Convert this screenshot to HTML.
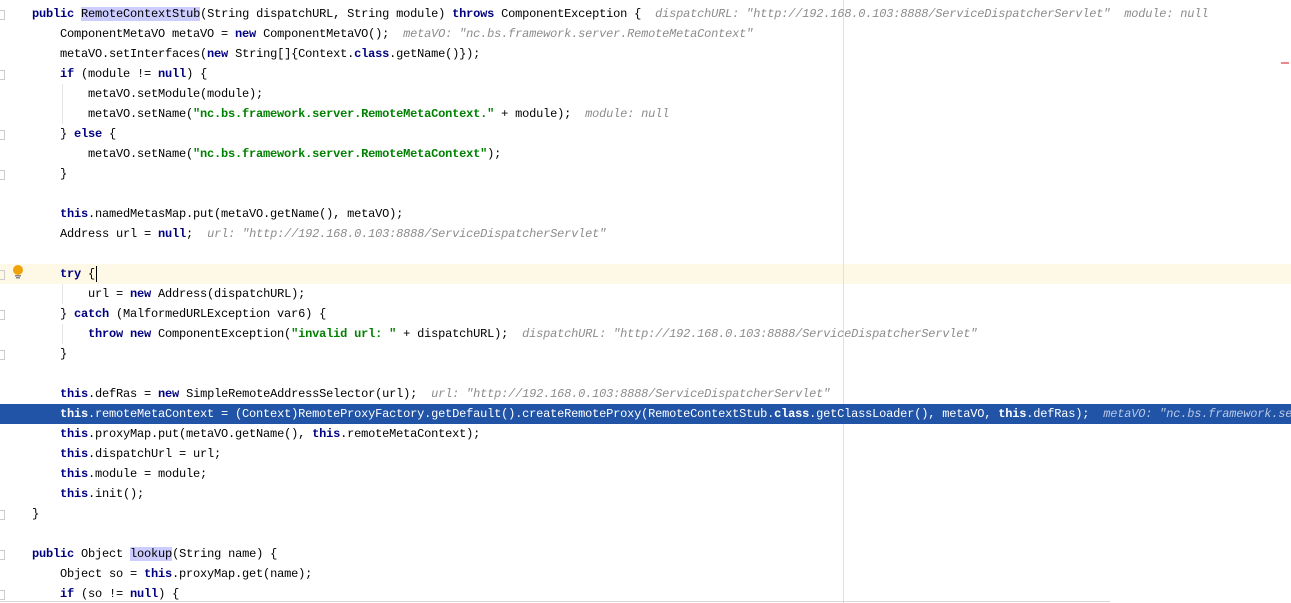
<!DOCTYPE html>
<html><head><meta charset="utf-8"><style>
html,body{margin:0;padding:0;background:#fff;width:1291px;height:603px;overflow:hidden;position:relative}
.r{position:absolute;left:4px;width:1287px;height:20px;overflow:hidden;font-family:"Liberation Mono",monospace;font-size:12px;letter-spacing:-0.2px;line-height:20px;white-space:pre;color:#000}
.k{color:#000080;font-weight:bold}
.s{color:#008000;font-weight:bold}
.h{color:#8c8c8c;font-style:italic}
.hl{background:#ccccff}
.sel{background:#2154a6;color:#fff}
.sel .k,.sel .s{color:#fff}
.sel .h{color:#b8c8e8}
.cur{background:#fdf9e6}
.g{position:absolute;width:1px;background:#e6e6e6}
.f{position:absolute;left:0;width:4px;height:8px;border:1px solid #ccc;border-left:none}
</style></head><body>
<div class="cur" style="position:absolute;left:0;top:264px;width:1291px;height:20px"></div>
<div class="sel" style="position:absolute;left:0;top:404px;width:1291px;height:20px"></div>
<div style="position:absolute;left:843px;top:0;width:1px;height:603px;background:#e0e0e0"></div>
<div style="position:absolute;left:0;top:601px;width:1110px;height:1px;background:#d8d8d8"></div>
<div style="position:absolute;left:1281px;top:62px;width:8px;height:2px;background:#e88"></div>
<div class="g" style="left:62px;top:84px;height:40px"></div>
<div class="g" style="left:62px;top:284px;height:20px"></div>
<div class="g" style="left:62px;top:324px;height:20px"></div>
<div class="f" style="top:10px"></div>
<div class="f" style="top:70px"></div>
<div class="f" style="top:130px"></div>
<div class="f" style="top:170px"></div>
<div class="f" style="top:270px"></div>
<div class="f" style="top:310px"></div>
<div class="f" style="top:350px"></div>
<div class="f" style="top:510px"></div>
<div class="f" style="top:550px"></div>
<div class="f" style="top:590px"></div>
<svg style="position:absolute;left:11px;top:264px" width="14" height="16"><circle cx="7" cy="6" r="5" fill="#f0a30a"/><rect x="4" y="11" width="6" height="1.5" fill="#888"/><rect x="5" y="13" width="4" height="1.5" fill="#888"/></svg>
<div style="position:absolute;left:96px;top:266px;width:1px;height:16px;background:#000"></div>

<div class="r" style="top:4px">    <span class="k">public</span> <span class="hl">RemoteContextStub</span>(String dispatchURL, String module) <span class="k">throws</span> ComponentException {  <span class="h">dispatchURL: "http://192.168.0.103:8888/ServiceDispatcherServlet"  module: null</span></div>
<div class="r" style="top:24px">        ComponentMetaVO metaVO = <span class="k">new</span> ComponentMetaVO();  <span class="h">metaVO: "nc.bs.framework.server.RemoteMetaContext"</span></div>
<div class="r" style="top:44px">        metaVO.setInterfaces(<span class="k">new</span> String[]{Context.<span class="k">class</span>.getName()});</div>
<div class="r" style="top:64px">        <span class="k">if</span> (module != <span class="k">null</span>) {</div>
<div class="r" style="top:84px">            metaVO.setModule(module);</div>
<div class="r" style="top:104px">            metaVO.setName(<span class="s">"nc.bs.framework.server.RemoteMetaContext."</span> + module);  <span class="h">module: null</span></div>
<div class="r" style="top:124px">        } <span class="k">else</span> {</div>
<div class="r" style="top:144px">            metaVO.setName(<span class="s">"nc.bs.framework.server.RemoteMetaContext"</span>);</div>
<div class="r" style="top:164px">        }</div>
<div class="r" style="top:204px">        <span class="k">this</span>.namedMetasMap.put(metaVO.getName(), metaVO);</div>
<div class="r" style="top:224px">        Address url = <span class="k">null</span>;  <span class="h">url: "http://192.168.0.103:8888/ServiceDispatcherServlet"</span></div>
<div class="r" style="top:264px">        <span class="k">try</span> {</div>
<div class="r" style="top:284px">            url = <span class="k">new</span> Address(dispatchURL);</div>
<div class="r" style="top:304px">        } <span class="k">catch</span> (MalformedURLException var6) {</div>
<div class="r" style="top:324px">            <span class="k">throw new</span> ComponentException(<span class="s">"invalid url: "</span> + dispatchURL);  <span class="h">dispatchURL: "http://192.168.0.103:8888/ServiceDispatcherServlet"</span></div>
<div class="r" style="top:344px">        }</div>
<div class="r" style="top:384px">        <span class="k">this</span>.defRas = <span class="k">new</span> SimpleRemoteAddressSelector(url);  <span class="h">url: "http://192.168.0.103:8888/ServiceDispatcherServlet"</span></div>
<div class="r sel" style="top:404px">        <span class="k">this</span>.remoteMetaContext = (Context)RemoteProxyFactory.getDefault().createRemoteProxy(RemoteContextStub.<span class="k">class</span>.getClassLoader(), metaVO, <span class="k">this</span>.defRas);  <span class="h">metaVO: "nc.bs.framework.server.RemoteMetaContext"</span></div>
<div class="r" style="top:424px">        <span class="k">this</span>.proxyMap.put(metaVO.getName(), <span class="k">this</span>.remoteMetaContext);</div>
<div class="r" style="top:444px">        <span class="k">this</span>.dispatchUrl = url;</div>
<div class="r" style="top:464px">        <span class="k">this</span>.module = module;</div>
<div class="r" style="top:484px">        <span class="k">this</span>.init();</div>
<div class="r" style="top:504px">    }</div>
<div class="r" style="top:544px">    <span class="k">public</span> Object <span class="hl">lookup</span>(String name) {</div>
<div class="r" style="top:564px">        Object so = <span class="k">this</span>.proxyMap.get(name);</div>
<div class="r" style="top:584px">        <span class="k">if</span> (so != <span class="k">null</span>) {</div>
</body></html>
